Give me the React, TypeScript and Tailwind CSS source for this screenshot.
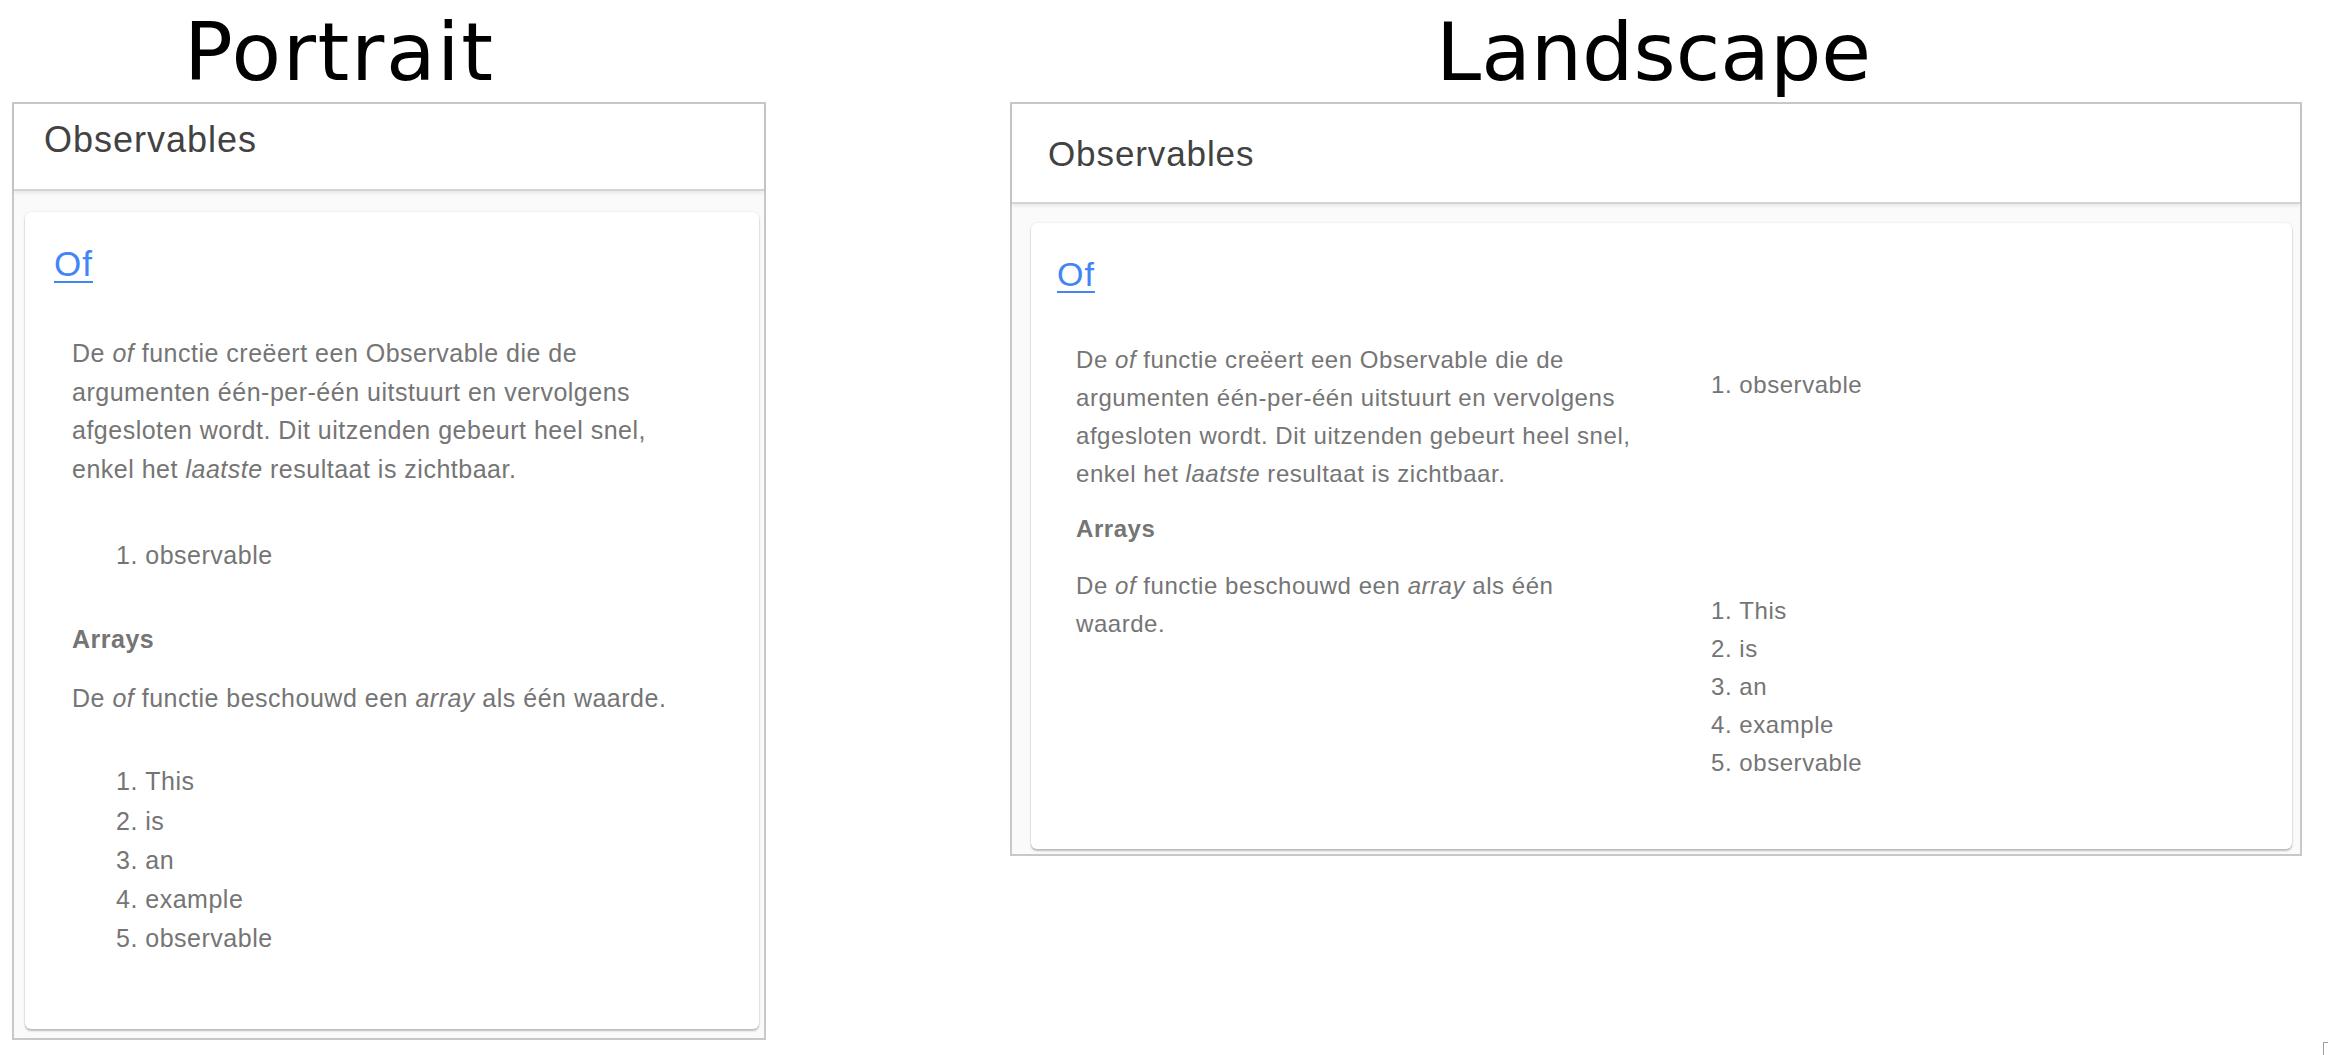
import React from 'react';

const sans = "font-['Liberation_Sans',Arial,sans-serif]";

function App() {
  const items = ['This', 'is', 'an', 'example', 'observable'];

  return (
    <div className={`relative flex h-[1055px] w-[2328px] overflow-hidden bg-white pl-[12px] ${sans}`}>
      {/* Portrait */}
      <div className="flex w-[754px] shrink-0 flex-col">
        <div className="h-[102px] pl-[172px] pt-[12px] font-['DejaVu_Sans',sans-serif] text-[81px] leading-none tracking-[1.6px] text-black">
          Portrait
        </div>
        <div className="flex flex-col border-2 border-[#c8c8c8] bg-[#fafafa]">
          <header className="h-[87px] border-b-2 border-[#d4d4d4] bg-white pl-[30px] pt-[16px] text-[36px] leading-[40px] tracking-[1px] text-[#424242] shadow-[0_2px_4px_rgba(0,0,0,0.08)]">
            Observables
          </header>
          <div className="mb-[9px] ml-[11px] mr-[5px] mt-[21px] rounded-[6px] bg-white pb-[71px] pl-[29px] pt-[32px] shadow-[0_2px_2px_rgba(0,0,0,0.24),0_0_2px_rgba(0,0,0,0.12)]">
            <a className="block w-fit text-[35px] leading-[40px] tracking-[1px] text-[#4285f4] underline decoration-2 underline-offset-[5px]">
              Of
            </a>
            <div className="max-w-[620px] pl-[18px] text-[25px] tracking-[0.5px] text-[#757575]">
              <p className="mt-[50px] leading-[38.7px]">
                De <i>of</i> functie creëert een Observable die de argumenten één-per-één uitstuurt en vervolgens
                afgesloten wordt. Dit uitzenden gebeurt heel snel, enkel het <i>laatste</i> resultaat is zichtbaar.
              </p>
              <ol className="mt-[47px] list-inside list-decimal pl-[44px] leading-[39.2px]">
                <li>observable</li>
              </ol>
              <h3 className="mt-[45px] font-bold leading-[38.7px]">Arrays</h3>
              <p className="mt-[20px] leading-[38.7px]">
                De <i>of</i> functie beschouwd een <i>array</i> als één waarde.
              </p>
              <ol className="mt-[45px] list-inside list-decimal pl-[44px] leading-[39.2px]">
                {items.map((item) => (
                  <li key={item}>{item}</li>
                ))}
              </ol>
            </div>
          </div>
        </div>
      </div>

      {/* Landscape */}
      <div className="ml-[244px] flex w-[1292px] shrink-0 flex-col">
        <div className="h-[102px] pl-[426px] pt-[12px] font-['DejaVu_Sans',sans-serif] text-[81px] leading-none text-black">
          Landscape
        </div>
        <div className="flex flex-col border-2 border-[#c8c8c8] bg-[#fafafa]">
          <header className="h-[100px] border-b-2 border-[#d4d4d4] bg-white pl-[36px] pt-[30px] text-[35px] leading-[40px] tracking-[0.9px] text-[#424242] shadow-[0_2px_4px_rgba(0,0,0,0.08)]">
            Observables
          </header>
          <div className="mb-[5px] ml-[19px] mr-[8px] mt-[19px] rounded-[6px] bg-white pb-[67px] pl-[26px] pt-[31px] shadow-[0_2px_2px_rgba(0,0,0,0.24),0_0_2px_rgba(0,0,0,0.12)]">
            <a className="block w-fit text-[34px] leading-[40px] tracking-[1px] text-[#4285f4] underline decoration-2 underline-offset-[5px]">
              Of
            </a>
            <div className="mt-[47px] grid grid-cols-[562px_1fr] pl-[19px] text-[24px] tracking-[0.55px] text-[#757575]">
              <p className="leading-[38px]">
                De <i>of</i> functie creëert een Observable die de argumenten één-per-één uitstuurt en vervolgens
                afgesloten wordt. Dit uitzenden gebeurt heel snel, enkel het <i>laatste</i> resultaat is zichtbaar.
              </p>
              <ol className="mt-[25px] list-inside list-decimal pl-[73px] leading-[38px]">
                <li>observable</li>
              </ol>
              <h3 className="col-span-2 mt-[17px] font-bold leading-[38px]">Arrays</h3>
              <p className="mt-[19px] leading-[38px]">
                De <i>of</i> functie beschouwd een <i>array</i> als één waarde.
              </p>
              <ol className="mt-[44px] list-inside list-decimal pl-[73px] leading-[38px]">
                {items.map((item) => (
                  <li key={item}>{item}</li>
                ))}
              </ol>
            </div>
          </div>
        </div>
      </div>

      <div className="absolute left-[2323px] top-[1042px] h-[13px] w-[5px] border-l border-t border-[#9e9e9e]" />
    </div>
  );
}

export default App;
